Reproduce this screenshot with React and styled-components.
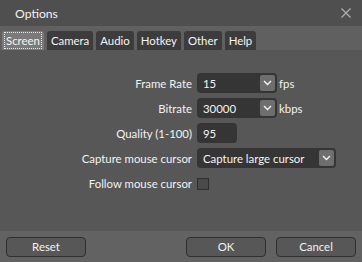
import React, { useState } from "react";
import styled, { createGlobalStyle } from "styled-components";

const Global = createGlobalStyle`
  html, body { margin: 0; padding: 0; background: #575757; }
  body { font-family: Lato, "Noto Sans", sans-serif; font-size: 11.4px; color: #f2f2f2; }
  * { box-sizing: border-box; }
`;

const Window = styled.div`
  width: 362px;
  height: 262px;
  display: flex;
  flex-direction: column;
  background: #575757;
`;

const TitleBar = styled.div`
  height: 26px;
  background: #4f4f4f;
  display: flex;
  align-items: center;
  justify-content: space-between;
  padding: 0 10px 0 15px;
  font-size: 12.2px;
`;

const Close = styled.span`
  width: 12px;
  height: 12px;
  display: flex;
`;

const TabStrip = styled.div`
  height: 24px;
  background: #606060;
  display: flex;
  align-items: flex-end;
  gap: 3px;
  padding: 0 2px;
`;

const Tab = styled.div`
  height: 19px;
  padding: 0 3px;
  display: flex;
  align-items: center;
  border-radius: 3px 3px 0 0;
  background: ${(p) => (p.$active ? "#7a7a7a" : "#3c3c3c")};
  color: #f4f4f4;
  span {
    padding: 0 1px;
    outline: ${(p) => (p.$active ? "1px dotted #e8e8e8" : "none")};
    line-height: 15px;
  }
`;

const Body = styled.div`
  flex: 1;
  padding-top: 23px;
`;

const Form = styled.div`
  display: grid;
  grid-template-columns: 192px auto;
  column-gap: 5px;
  row-gap: 5px;
  align-items: center;
`;

const Label = styled.div`
  text-align: right;
`;

const Field = styled.div`
  display: flex;
  align-items: center;
  gap: 2px;
  height: 20px;
`;

const Box = styled.div`
  width: ${(p) => p.$w}px;
  height: 20px;
  background: #353535;
  border-radius: 4px;
  display: flex;
  align-items: center;
  justify-content: space-between;
  padding: 0 2px 0 6px;
  color: #f4f4f4;
`;

const Arrow = styled.span`
  width: 15px;
  height: 16px;
  background: #6e6e6e;
  border-radius: 2px;
  display: flex;
  align-items: center;
  justify-content: center;
`;

const Check = styled.div`
  width: 12px;
  height: 12px;
  border: 1px solid #2e2e2e;
  background: #4a4a4a;
  margin-top: 2px;
`;

const Footer = styled.div`
  height: 31px;
  background: #626262;
  display: flex;
  align-items: center;
  padding: 0 6px;
  gap: 10px;
`;

const Button = styled.button`
  width: 80px;
  height: 20px;
  background: #575757;
  border: 1px solid #2f2f2f;
  border-radius: 4px;
  color: #f2f2f2;
  font: inherit;
  padding: 0;
  margin-left: ${(p) => (p.$push ? "auto" : "0")};
`;

const Chevron = () => (
  <svg width="9" height="6" viewBox="0 0 9 6">
    <path d="M1 1l3.5 3.5L8 1" fill="none" stroke="#f4f4f4" strokeWidth="1.4" />
  </svg>
);

const Select = ({ w, value }) => (
  <Box $w={w}>
    <span>{value}</span>
    <Arrow>
      <Chevron />
    </Arrow>
  </Box>
);

export default function App() {
  const [tab, setTab] = useState("Screen");
  const tabs = ["Screen", "Camera", "Audio", "Hotkey", "Other", "Help"];
  return (
    <Window>
      <Global />
      <TitleBar>
        <span>Options</span>
        <Close>
          <svg width="12" height="12" viewBox="0 0 12 12">
            <path d="M1.5 1.5l9 9M10.5 1.5l-9 9" stroke="#b0b0b0" strokeWidth="1.2" />
          </svg>
        </Close>
      </TitleBar>
      <TabStrip>
        {tabs.map((t) => (
          <Tab key={t} $active={t === tab} onClick={() => setTab(t)}>
            <span>{t}</span>
          </Tab>
        ))}
      </TabStrip>
      <Body>
        <Form>
          <Label>Frame Rate</Label>
          <Field>
            <Select w={80} value="15" />
            <span>fps</span>
          </Field>
          <Label>Bitrate</Label>
          <Field>
            <Select w={80} value="30000" />
            <span>kbps</span>
          </Field>
          <Label>Quality (1-100)</Label>
          <Field>
            <Box $w={40}>95</Box>
          </Field>
          <Label>Capture mouse cursor</Label>
          <Field>
            <Select w={139} value="Capture large cursor" />
          </Field>
          <Label>Follow mouse cursor</Label>
          <Field>
            <Check />
          </Field>
        </Form>
      </Body>
      <Footer>
        <Button>Reset</Button>
        <Button $push>OK</Button>
        <Button>Cancel</Button>
      </Footer>
    </Window>
  );
}
